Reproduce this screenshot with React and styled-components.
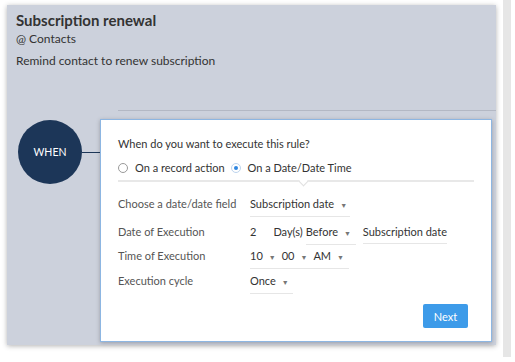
import styled, { createGlobalStyle } from 'styled-components';

const GlobalStyle = createGlobalStyle`
  body {
    margin: 0;
    background: #ffffff;
    font-family: "Lato", "Open Sans", sans-serif;
  }
`;

const Page = styled.div`
  display: flex;
  align-items: flex-start;
  width: 515px;
  height: 362px;
  overflow: hidden;
`;

const Panel = styled.div`
  margin: 5px 0 0 7px;
  width: 489px;
  height: 340px;
  background: #ccd1dc;
  box-shadow: 0 1px 5px rgba(0, 0, 0, 0.3);
  box-sizing: border-box;
  padding-top: 6px;
`;

const Strip = styled.div`
  margin-left: 7px;
  width: 8px;
  height: 357px;
  background: #e6e6e6;
`;

const Header = styled.div`
  padding-left: 9px;
  color: #333;
`;

const Title = styled.h1`
  margin: 0;
  font-size: 15px;
  line-height: 18px;
  font-weight: 700;
`;

const Module = styled.div`
  margin-top: 2px;
  font-size: 12px;
  line-height: 16px;
`;

const Description = styled.div`
  margin-top: 6px;
  font-size: 12px;
  line-height: 16px;
`;

const Rule = styled.div`
  margin: 41px 0 0 111px;
  height: 1px;
  background: #b3b8c4;
`;

const FlowRow = styled.div`
  display: flex;
  align-items: flex-start;
  margin-top: 8px;
`;

const WhenNode = styled.div`
  margin: 1px 0 0 11px;
  width: 64px;
  height: 64px;
  border-radius: 50%;
  background: #1c3658;
  color: #fff;
  font-size: 10.5px;
  display: flex;
  align-items: center;
  justify-content: center;
`;

const Connector = styled.div`
  margin-top: 33px;
  width: 18px;
  height: 1px;
  background: #1c3658;
`;

const Card = styled.div`
  width: 392px;
  height: 223px;
  box-sizing: border-box;
  background: #fff;
  border: 1px solid #8db6e2;
  box-shadow: 0 1px 4px rgba(0, 0, 0, 0.25);
  padding: 17px 17px 0 17px;
  display: flex;
  flex-direction: column;
  color: #333;
  font-size: 11px;
`;

const Question = styled.div`
  line-height: 14px;
`;

const RadioGroup = styled.div`
  display: flex;
  align-items: center;
  gap: 6px;
  margin-top: 10px;
  line-height: 14px;
`;

const RadioOption = styled.label`
  display: flex;
  align-items: center;
  gap: 7px;
`;

const RadioDot = styled.span`
  width: 10px;
  height: 10px;
  border-radius: 50%;
  border: 1px solid ${(p) => (p.$checked ? '#bcd4ee' : '#9a9a9a')};
  box-sizing: border-box;
  display: flex;
  align-items: center;
  justify-content: center;

  &::after {
    content: '';
    width: 4px;
    height: 4px;
    border-radius: 50%;
    background: ${(p) => (p.$checked ? '#2f86e0' : 'transparent')};
  }
`;

const Divider = styled.div`
  position: relative;
  margin-top: 5px;
  width: 356px;
  height: 2px;
  background: #e8e8e8;

  &::after {
    content: '';
    position: absolute;
    left: 182px;
    top: -2px;
    width: 6px;
    height: 6px;
    background: #fff;
    border-right: 1px solid #e0e0e0;
    border-bottom: 1px solid #e0e0e0;
    transform: rotate(45deg);
  }
`;

const FieldRow = styled.div`
  display: flex;
  align-items: flex-start;
  margin-top: ${(p) => p.$gap}px;
  line-height: 16px;
`;

const Label = styled.div`
  width: 132px;
  color: #555;
`;

const Values = styled.div`
  display: flex;
  align-items: flex-start;
`;

const Select = styled.div`
  display: flex;
  align-items: center;
  gap: ${(p) => p.$gap || 0}px;
  margin-left: ${(p) => p.$offset || 0}px;
  padding-bottom: 3px;
  border-bottom: 1px solid ${(p) => (p.$plain ? 'transparent' : '#e6e6e6')};
  min-width: ${(p) => p.$min || 0}px;
`;

const Caret = styled.span`
  color: #777;
  font-size: 7px;
  margin-left: 6px;
`;

const Footer = styled.div`
  display: flex;
  justify-content: flex-end;
  margin-top: 10px;
  padding-right: 6px;
`;

const NextButton = styled.button`
  width: 45px;
  height: 24px;
  border: none;
  border-radius: 2px;
  background: #3d9be9;
  color: #fff;
  font-family: inherit;
  font-size: 11px;
`;

const Option = ({ children }) => (
  <span>
    {children}
    <Caret>▼</Caret>
  </span>
);

export default function App() {
  return (
    <>
      <GlobalStyle />
      <Page>
        <Panel>
          <Header>
            <Title>Subscription renewal</Title>
            <Module>@ Contacts</Module>
            <Description>Remind contact to renew subscription</Description>
          </Header>
          <Rule />
          <FlowRow>
            <WhenNode>WHEN</WhenNode>
            <Connector />
            <Card>
              <Question>When do you want to execute this rule?</Question>
              <RadioGroup>
                <RadioOption>
                  <RadioDot />
                  On a record action
                </RadioOption>
                <RadioOption>
                  <RadioDot $checked />
                  On a Date/Date Time
                </RadioOption>
              </RadioGroup>
              <Divider />
              <FieldRow $gap={14}>
                <Label>Choose a date/date field</Label>
                <Select $min={100}>
                  <Option>Subscription date</Option>
                </Select>
              </FieldRow>
              <FieldRow $gap={7}>
                <Label>Date of Execution</Label>
                <Values>
                  <Select $gap={17} $plain>
                    <span>2</span>
                    <span>Day(s)</span>
                  </Select>
                  <Select $min={50} $offset={3}>
                    <Option>Before</Option>
                  </Select>
                  <Select $offset={7}>
                    <span>Subscription date</span>
                  </Select>
                </Values>
              </FieldRow>
              <FieldRow $gap={3}>
                <Label>Time of Execution</Label>
                <Select $gap={6} $min={99}>
                  <Option>10</Option>
                  <Option>00</Option>
                  <Option>AM</Option>
                </Select>
              </FieldRow>
              <FieldRow $gap={4}>
                <Label>Execution cycle</Label>
                <Select $min={43}>
                  <Option>Once</Option>
                </Select>
              </FieldRow>
              <Footer>
                <NextButton>Next</NextButton>
              </Footer>
            </Card>
          </FlowRow>
        </Panel>
        <Strip />
      </Page>
    </>
  );
}
